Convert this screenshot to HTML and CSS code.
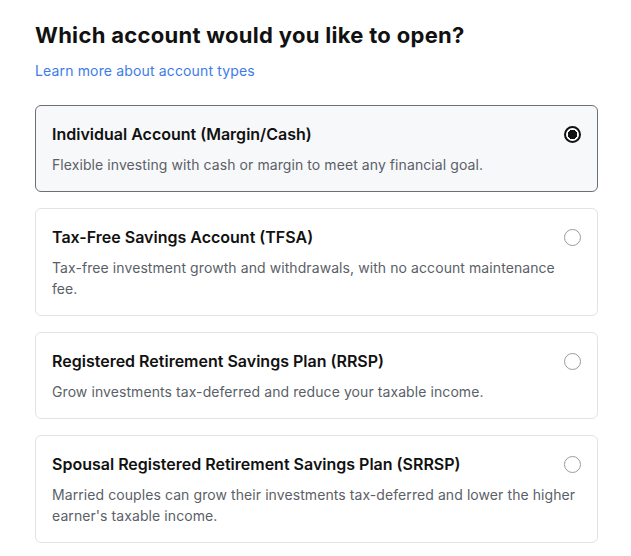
FILE: index.html
```html
<!DOCTYPE html>
<html>
<head>
<meta charset="utf-8">
<link rel="stylesheet" href="styles.css">
</head>
<body>
<main class="page">
  <h1 class="title">Which account would you like to open?</h1>
  <a class="learn" href="#">Learn more about account types</a>
  <div class="list">
    <div class="card selected">
      <div class="head">
        <span class="name">Individual Account (Margin/Cash)</span>
        <span class="radio on"></span>
      </div>
      <p class="desc">Flexible investing with cash or margin to meet any financial goal.</p>
    </div>
    <div class="card">
      <div class="head">
        <span class="name">Tax-Free Savings Account (TFSA)</span>
        <span class="radio"></span>
      </div>
      <p class="desc">Tax-free investment growth and withdrawals, with no account maintenance fee.</p>
    </div>
    <div class="card">
      <div class="head">
        <span class="name">Registered Retirement Savings Plan (RRSP)</span>
        <span class="radio"></span>
      </div>
      <p class="desc">Grow investments tax-deferred and reduce your taxable income.</p>
    </div>
    <div class="card">
      <div class="head">
        <span class="name">Spousal Registered Retirement Savings Plan (SRRSP)</span>
        <span class="radio"></span>
      </div>
      <p class="desc">Married couples can grow their investments tax-deferred and lower the higher earner's taxable income.</p>
    </div>
  </div>
</main>
</body>
</html>
```
FILE: styles.css
```css
html, body {
  margin: 0;
  padding: 0;
  background: #ffffff;
}
body {
  font-family: "Inter", "Liberation Sans", sans-serif;
  color: #111111;
}
.page {
  width: 563px;
  margin-left: 35px;
  padding-top: 20px;
}
.title {
  margin: 0;
  font-size: 22px;
  line-height: 30px;
  font-weight: 700;
  letter-spacing: 0.3px;
  color: #111111;
}
.learn {
  display: block;
  margin-top: 11px;
  font-size: 14px;
  line-height: 20px;
  letter-spacing: 0.15px;
  color: #3d7ce8;
  text-decoration: none;
}
.list {
  margin-top: 24px;
  display: flex;
  flex-direction: column;
  gap: 16px;
}
.card {
  border: 1px solid #e2e3e6;
  border-radius: 6px;
  padding: 16px 16px 16px 16px;
  background: #ffffff;
}
.card.selected {
  border-color: #6e6f73;
  background: #f7f8fa;
}
.head {
  display: flex;
  justify-content: space-between;
  align-items: center;
}
.name {
  font-size: 16px;
  line-height: 24px;
  font-weight: 600;
  color: #111111;
}
.radio {
  width: 17px;
  height: 17px;
  border: 1px solid #9a9b9f;
  border-radius: 50%;
  box-sizing: border-box;
  flex: none;
}
.radio.on {
  border: 2px solid #111111;
  background: radial-gradient(circle, #111111 0 4.5px, #ffffff 5px);
}
.desc {
  margin: 8px 0 0 0;
  font-size: 14px;
  line-height: 21px;
  letter-spacing: 0.08px;
  color: #5b5f68;
  padding-right: 0;
}
```
